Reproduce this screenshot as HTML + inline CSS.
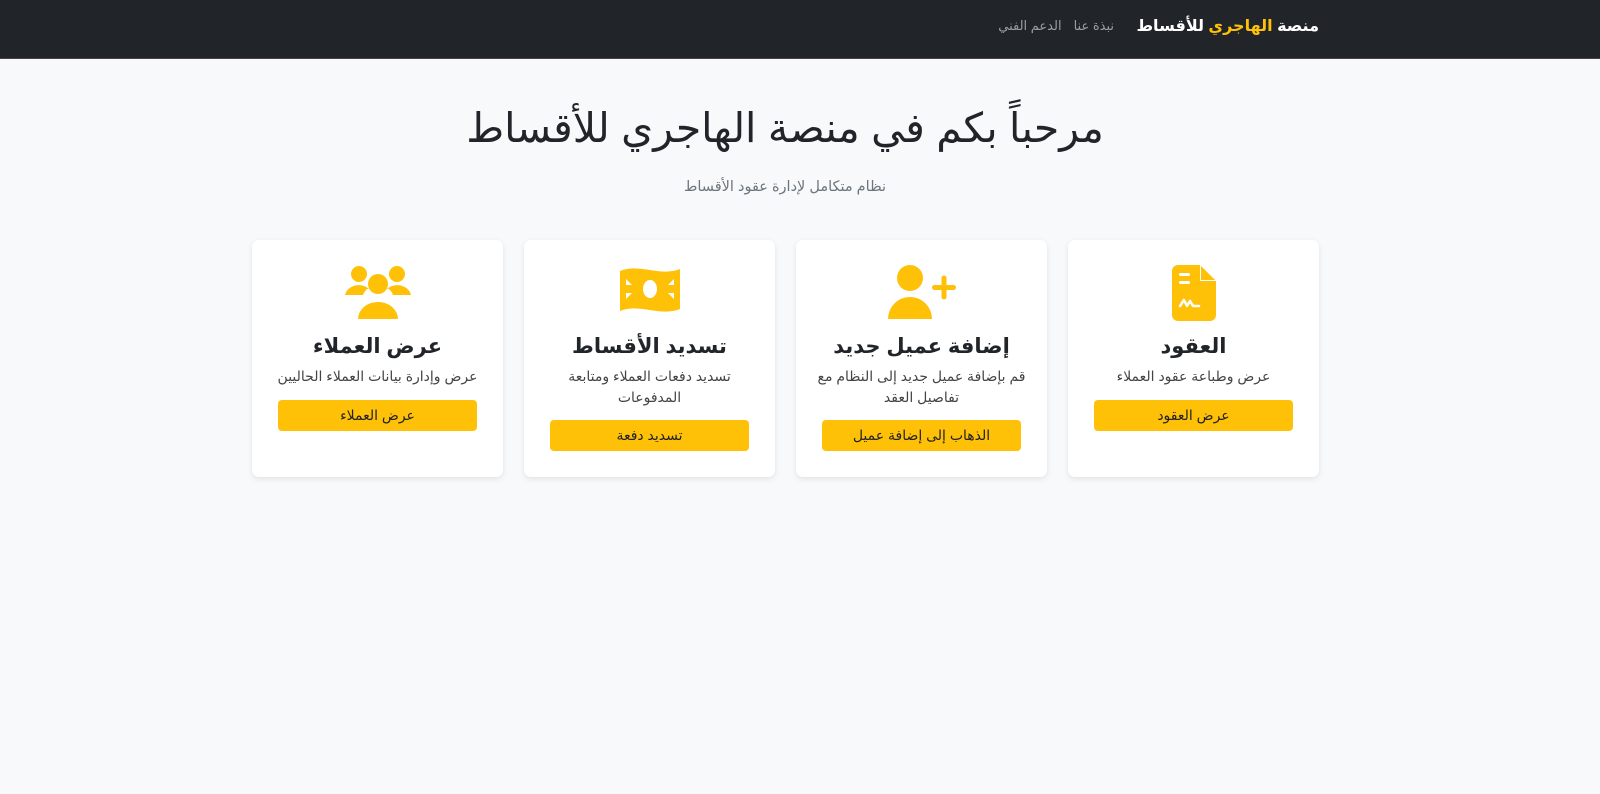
<!DOCTYPE html>
<html lang="ar" dir="rtl"><head><meta charset="utf-8">
<style>
*{box-sizing:border-box;margin:0;padding:0}
body{width:1600px;height:794px;background:#f8f9fa;font-family:"Liberation Sans","Noto Sans CJK SC","DejaVu Sans",sans-serif;color:#212529;overflow:hidden}
nav{height:59px;background:#212529;position:relative;border-bottom:1px solid #444}
.brand{position:absolute;right:281px;top:16px;font-size:16px;font-weight:bold;color:#fff;white-space:nowrap}
.brand span{color:#ffc107}
.links{position:absolute;right:486px;top:18px;font-size:13px;color:#9a9da1;display:flex;gap:12px;white-space:nowrap}
h1{position:absolute;top:104px;left:0;width:1570px;text-align:center;font-size:41px;font-weight:normal;color:#212529}
.sub{position:absolute;top:179px;left:0;width:1570px;text-align:center;font-size:14.5px;color:#6c757d}
.card{position:absolute;top:240px;width:251px;height:237px;background:#fff;border-radius:7px;box-shadow:0 2px 6px rgba(0,0,0,.09);text-align:center}
.card svg{position:absolute;top:25px;left:50%;transform:translateX(-50%)}
.t{position:absolute;top:94px;width:100%;font-size:21px;font-weight:bold}
.d{position:absolute;top:126px;left:20px;right:20px;font-size:14px;line-height:21px;color:#444}
.b{position:absolute;left:26px;right:26px;height:31px;background:#ffc107;border-radius:4px;font-size:14px;line-height:31px;color:#222}
</style></head><body>
<nav><div class="brand">منصة <span>الهاجري</span> للأقساط</div>
<div class="links"><span>نبذة عنا</span><span>الدعم الفني</span></div></nav>
<h1>مرحباً بكم في منصة الهاجري للأقساط</h1>
<div class="sub">نظام متكامل لإدارة عقود الأقساط</div>

<div class="card" style="left:1068px">
<svg width="44" height="56" viewBox="0 0 44 56"><path d="M6 0h22l16 16v34a6 6 0 0 1-6 6H6a6 6 0 0 1-6-6V6a6 6 0 0 1 6-6z" fill="#ffc107"/><path d="M28 0v16h16" fill="#fff"/><path d="M29 1v14h14z" fill="#ffc107"/><rect x="7" y="8" width="11" height="3" rx="1.5" fill="#fff"/><rect x="7" y="16" width="11" height="3" rx="1.5" fill="#fff"/><path d="M8 41l4-6 3 6 3-5 3 5h6" stroke="#fff" stroke-width="2.5" fill="none" stroke-linecap="round" stroke-linejoin="round"/></svg>
<div class="t">العقود</div><div class="d">عرض وطباعة عقود العملاء</div><div class="b" style="top:160px">عرض العقود</div></div>

<div class="card" style="left:796px">
<svg width="68" height="54" viewBox="0 0 68 54"><circle cx="22" cy="13" r="13" fill="#ffc107"/><path d="M0 54a22 22 0 0 1 44 0z" fill="#ffc107"/><rect x="44" y="20" width="24" height="5" rx="2.5" fill="#ffc107"/><rect x="53.5" y="10.5" width="5" height="24" rx="2.5" fill="#ffc107"/></svg>
<div class="t">إضافة عميل جديد</div><div class="d">قم بإضافة عميل جديد إلى النظام مع تفاصيل العقد</div><div class="b" style="top:180px">الذهاب إلى إضافة عميل</div></div>

<div class="card" style="left:524px">
<svg width="60" height="48" viewBox="0 0 60 48"><path d="M0 6c20-8 40 6 60-2v40c-20 8-40-6-60 2z" fill="#ffc107"/><ellipse cx="30" cy="24" rx="7" ry="9" fill="#fff"/><path d="M6 14v6h6zM54 14v6h-6zM6 34v-6h6zM54 34v-6h-6z" fill="#fff"/></svg>
<div class="t">تسديد الأقساط</div><div class="d">تسديد دفعات العملاء ومتابعة المدفوعات</div><div class="b" style="top:180px">تسديد دفعة</div></div>

<div class="card" style="left:252px">
<svg width="66" height="54" viewBox="0 0 66 54"><circle cx="14" cy="9" r="8" fill="#ffc107"/><circle cx="52" cy="9" r="8" fill="#ffc107"/><path d="M0 30a14 12 0 0 1 24-6h-2a16 16 0 0 0-4 6z" fill="#ffc107"/><path d="M66 30a14 12 0 0 0-24-6h2a16 16 0 0 1 4 6z" fill="#ffc107"/><circle cx="33" cy="19" r="10" fill="#ffc107"/><path d="M13 54a20 17 0 0 1 40 0z" fill="#ffc107"/></svg>
<div class="t">عرض العملاء</div><div class="d">عرض وإدارة بيانات العملاء الحاليين</div><div class="b" style="top:160px">عرض العملاء</div></div>
</body></html>
